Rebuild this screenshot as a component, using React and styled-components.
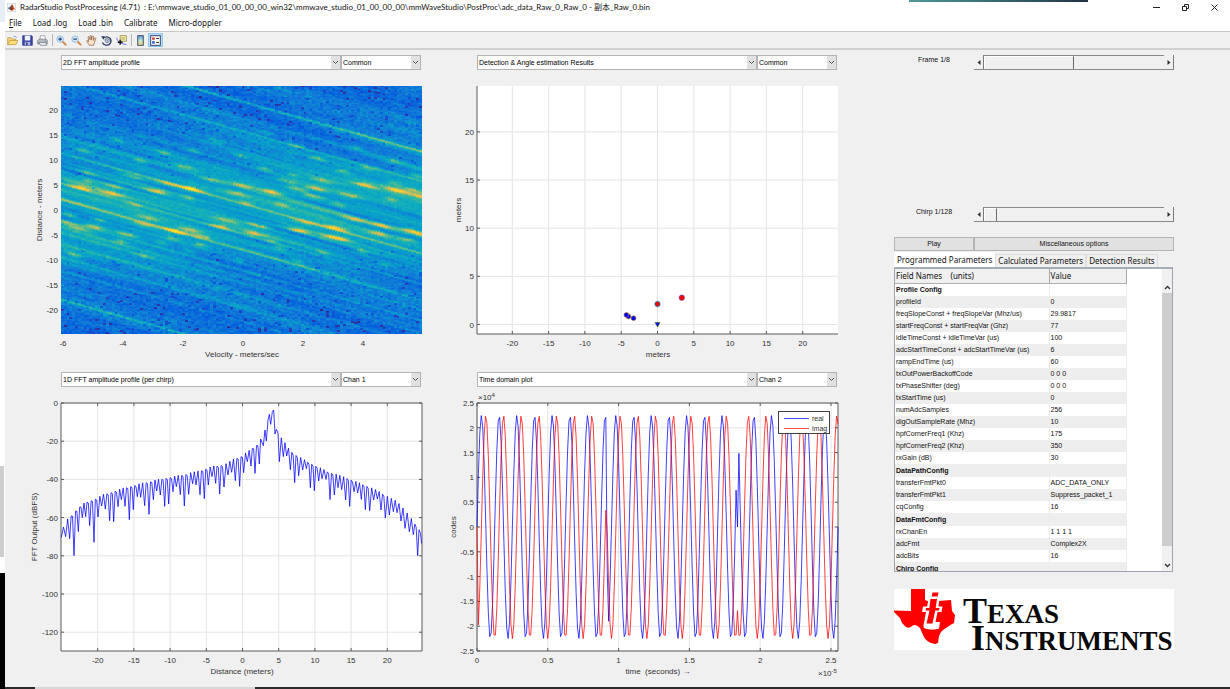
import React, { useMemo, useState } from 'react';
import styled, { createGlobalStyle } from 'styled-components';

const BG = '#f0f0f0';
const PLOT = { left: 56, right: 417, top: 16, bottom: 264 };

const range = (from, to, step) => {
    const out = [];
    for (let v = from; v <= to; v += step) out.push(v);
    return out;
};

/* ---------- data ---------- */

const PARAMS = [
    ['Profile Config'],
    ['profileId', '0'],
    ['freqSlopeConst + freqSlopeVar (Mhz/us)', '29.9817'],
    ['startFreqConst + startFreqVar (Ghz)', '77'],
    ['idleTimeConst + idleTimeVar (us)', '100'],
    ['adcStartTimeConst + adcStartTimeVar (us)', '6'],
    ['rampEndTime (us)', '60'],
    ['txOutPowerBackoffCode', '0 0 0'],
    ['txPhaseShifter (deg)', '0 0 0'],
    ['txStartTime (us)', '0'],
    ['numAdcSamples', '256'],
    ['digOutSampleRate (Mhz)', '10'],
    ['hpfCornerFreq1 (Khz)', '175'],
    ['hpfCornerFreq2 (Khz)', '350'],
    ['rxGain (dB)', '30'],
    ['DataPathConfig'],
    ['transferFmtPkt0', 'ADC_DATA_ONLY'],
    ['transferFmtPkt1', 'Suppress_packet_1'],
    ['cqConfig', '16'],
    ['DataFmtConfig'],
    ['rxChanEn', '1 1 1 1'],
    ['adcFmt', 'Complex2X'],
    ['adcBits', '16'],
    ['Chirp Config'],
];

const PARULA = [
    [0, 53, 42, 135], [0.06, 38, 62, 190], [0.13, 3, 96, 224], [0.25, 18, 124, 214],
    [0.35, 8, 156, 206], [0.44, 16, 174, 188], [0.53, 60, 184, 155], [0.63, 135, 191, 119],
    [0.74, 208, 187, 89], [0.84, 252, 200, 48], [1, 249, 240, 20],
];

const parula = (v) => {
    const i = Math.max(1, PARULA.findIndex(s => s[0] >= v));
    const a = PARULA[i - 1];
    const b = PARULA[i];
    const t = (v - a[0]) / (b[0] - a[0]);
    return `rgb(${[1, 2, 3].map(k => Math.round(a[k] + (b[k] - a[k]) * t)).join(',')})`;
};

// range-doppler ridges: [start row on the left edge, gain]
const RIDGES = [
    [-59, 0.36], [687, 0.34], [247, 0.26], [386, 0.22], [338, 0.15], [272, 0.13], [448, 0.17], [300, 0.1],
    [486, 0.12], [30, 0.19], [-10, 0.11], [130, 0.1], [200, 0.11], [160, 0.09], [520, 0.12], [560, 0.15],
    [600, 0.1], [-130, 0.12], [90, 0.08], [640, 0.08], [415, 0.1], [-180, 0.08], [325, 0.1], [470, 0.1],
];

// strong reflections: [x, y, gain]
const BLOBS = [
    [240, 350, 0.4], [335, 345, 0.25], [330, 368, 0.3], [465, 360, 0.36], [570, 353, 0.42], [500, 338, 0.26],
    [630, 327, 0.25], [720, 343, 0.3], [705, 367, 0.25], [810, 362, 0.4], [945, 352, 0.4], [885, 352, 0.3],
    [960, 328, 0.25], [860, 330, 0.28], [935, 375, 0.25], [1040, 372, 0.3], [1090, 342, 0.35], [1185, 358, 0.38],
    [1235, 358, 0.3], [1258, 376, 0.26], [235, 472, 0.28], [280, 468, 0.38], [295, 447, 0.22], [375, 490, 0.3],
    [360, 512, 0.22], [520, 480, 0.42], [565, 476, 0.3], [515, 502, 0.2], [440, 440, 0.25], [600, 495, 0.26],
    [595, 520, 0.22], [660, 467, 0.38], [675, 447, 0.24], [770, 463, 0.3], [755, 488, 0.38], [835, 530, 0.2],
    [810, 508, 0.2], [895, 478, 0.42], [910, 453, 0.24], [1000, 470, 0.38], [985, 497, 0.3], [965, 545, 0.2],
    [1020, 503, 0.28], [1140, 463, 0.35], [1130, 487, 0.3], [1225, 479, 0.38], [1215, 505, 0.28], [1260, 490, 0.3],
    [1080, 540, 0.22], [1060, 445, 0.25], [195, 455, 0.28], [430, 460, 0.25], [230, 555, 0.15], [205, 430, 0.2],
    [245, 237, 0.2], [345, 205, 0.15], [490, 245, 0.22], [575, 240, 0.22], [415, 270, 0.22], [550, 287, 0.25],
    [640, 212, 0.18], [715, 253, 0.2], [795, 185, 0.16], [885, 224, 0.18], [790, 293, 0.22], [875, 312, 0.2],
    [950, 262, 0.2], [1065, 230, 0.18], [1025, 300, 0.22], [1100, 292, 0.2], [1180, 270, 0.2], [1180, 338, 0.22],
    [1250, 315, 0.22], [480, 515, 0.2], [260, 330, 0.22], [260, 305, 0.2], [210, 548, 0.2], [560, 380, 0.2],
    [395, 317, 0.24], [400, 400, 0.18], [560, 540, 0.16], [710, 570, 0.15], [890, 570, 0.16], [1150, 580, 0.16],
    [430, 555, 0.16], [770, 610, 0.12], [840, 400, 0.2], [730, 395, 0.2], [1010, 400, 0.18], [1170, 385, 0.2],
];

const createNoise = (seed) => {
    let s = seed;
    return () => {
        s = (s * 1664525 + 1013904223) % 4294967296;
        return s / 4294967296;
    };
};

const buildHeatmap = () => {
    const rnd = createNoise(71);
    const cols = 128;
    const rows = 248;
    const levels = 30;
    const slope = 0.279;
    const edge = (c) => PLOT.left + Math.round((c * (PLOT.right - PLOT.left)) / cols);
    const streak = Array.from({ length: 600 }, () => rnd() - 0.5);
    const streakPhase = Array.from({ length: 600 }, () => rnd() * 6.28);
    const grain = Array.from({ length: rows + 1 }, () => Array.from({ length: cols }, () => rnd()));
    const hole = Array.from({ length: rows + 1 }, () => Array.from({ length: cols }, () => rnd()));
    const paths = Array.from({ length: levels + 1 }, () => '');
    const streakAt = (k, x) => streak[k] * (1 + Math.sin(x / 110 + streakPhase[k]));

    for (let r = 0; r < rows; r++) {
        let start = 0;
        let last = -1;
        const y = 46 + r * 3;
        const near = Math.exp(-(((y - 410) / 205) ** 2));
        for (let c = 0; c <= cols; c++) {
            let level = -2;
            if (c < cols) {
                const x = 183 + c * 8.45;
                const u = y - slope * (x - 183);
                let v = 0.19 + 0.21 * near;
                const k = (u + 400) / 9;
                const k0 = Math.floor(k);
                v += (streakAt(k0, x) * (k0 + 1 - k) + streakAt(k0 + 1, x) * (k - k0)) * 0.13 * (0.5 + 0.7 * near);
                v += Math.sin(u / 27 + 1.2 * Math.sin(x / 260)) * 0.035;
                RIDGES.forEach(([u0, g]) => {
                    const d = (u - u0) / 4.2;
                    if (Math.abs(d) < 3) v += g * (0.65 + 0.25 * near) * Math.exp(-d * d);
                });
                BLOBS.forEach(([bx, by, g]) => {
                    const dx = (x - bx) / (g > 0.23 ? 34 : 20);
                    if (Math.abs(dx) > 3) return;
                    const dy = (y - by - slope * 0.8 * (x - bx)) / 6.5;
                    if (Math.abs(dy) < 3) v += g * 1.05 * Math.exp(-dx * dx - dy * dy);
                });
                const n = (grain[r][c] + grain[r + 1][c]) / 2;
                v += (n - 0.5) * (0.21 - 0.12 * near);
                if (Math.min(hole[r][c], hole[r + 1][c]) < 0.03 * (1 - near) ** 1.5) v -= 0.17 * (0.4 + n);
                level = Math.round(Math.min(1, Math.max(0, v)) * levels);
            }
            if (level !== last) {
                if (last >= 0) {
                    paths[last] += `M${edge(start)} ${PLOT.top + r}H${edge(c)}v1H${edge(start)}z`;
                }
                start = c;
                last = level;
            }
        }
    }
    return paths.map((d, i) => ({ d, fill: parula(i / levels) })).filter(p => p.d);
};

const FFT_TOP = [
    [192, 485], [205, 460], [217, 450], [228, 437], [240, 425], [252, 416], [265, 410], [290, 401], [310, 390],
    [345, 379], [380, 368], [430, 355], [470, 346], [515, 337], [560, 328], [605, 317], [640, 305], [675, 300],
    [700, 284], [722, 276], [740, 264], [760, 248], [772, 240], [783, 222], [842, 218], [855, 235], [866, 252],
    [880, 267], [900, 278], [925, 293], [950, 305], [985, 322], [1020, 333], [1060, 348], [1095, 362], [1130, 377],
    [1160, 395], [1190, 410], [1210, 432], [1225, 450], [1245, 478], [1265, 505],
];

const FFT_DIPS = [
    [184, 517], [197, 515], [209, 521], [222, 572], [235, 500], [247, 458], [257, 455], [269, 482], [282, 532],
    [294, 456], [305, 423], [316, 432], [329, 467], [341, 470], [354, 425], [364, 404], [375, 424], [388, 464],
    [400, 434], [412, 395], [422, 397], [434, 422], [447, 448], [460, 404], [470, 378], [481, 390], [494, 424],
    [506, 417], [519, 380], [529, 365], [541, 389], [553, 423], [566, 388], [578, 356], [588, 360], [600, 389],
    [613, 401], [625, 360], [636, 335], [647, 355], [659, 387], [672, 366], [684, 330], [695, 322], [706, 347],
    [719, 364], [731, 323], [742, 290], [753, 303], [765, 325], [778, 297],
    [838, 290], [850, 275], [860, 273], [871, 314], [884, 353], [896, 332], [908, 315], [919, 311], [931, 368],
    [943, 377], [956, 348], [966, 341], [978, 343], [990, 404], [1003, 390], [1014, 368], [1025, 374], [1037, 405],
    [1049, 424], [1062, 380], [1073, 384], [1084, 403], [1096, 434], [1109, 437], [1121, 405], [1132, 402],
    [1143, 435], [1156, 459], [1168, 450], [1180, 440], [1191, 443], [1203, 468], [1215, 490], [1228, 500],
    [1240, 509], [1253, 572], [1265, 535],
];

const FFT_PEAK = [
    [782, 222], [790, 242], [795, 195], [799, 228], [804, 165], [808, 148], [812, 178], [817, 140], [821, 135],
    [825, 207], [829, 193], [834, 205],
];

const fftTop = (x) => {
    const i = Math.max(1, FFT_TOP.findIndex(p => p[0] >= x));
    const [x0, y0] = FFT_TOP[i - 1];
    const [x1, y1] = FFT_TOP[i];
    return y0 + ((y1 - y0) * (x - x0)) / (x1 - x0);
};

const toLine = (points) => 'M' + points.map(([x, y]) => `${x.toFixed(2)} ${y.toFixed(2)}`).join('L');

const buildFft = () => {
    const pts = [];
    FFT_DIPS.forEach((dip, i) => {
        pts.push(dip);
        const next = FFT_DIPS[i + 1];
        if (!next) return;
        if (dip[0] === 778) {
            pts.push(...FFT_PEAK);
            return;
        }
        const mid = (dip[0] + next[0]) / 2;
        // two samples share the lobe only beside the deepest nulls
        if (Math.max(dip[1], next[1]) - fftTop(mid) > 70) {
            pts.push([mid - 2, fftTop(mid - 2)], [mid + 2, fftTop(mid + 2) + 4]);
        } else {
            pts.push([mid, fftTop(mid) - 2]);
        }
    });
    return toLine(pts.map(([x, y]) => [x / 3 - 5, y / 3 - 22]));
};

const REAL_GLITCH = { 92: -0.4, 183: 0.33, 184: 0, 185: 0.66 };
const IMAG_GLITCH = { 0: 0, 91: 0.15, 184: -0.75 };

const buildSignals = () => {
    const wave = (n) => Math.sin((2 * Math.PI * n) / 12.5);
    const toPoint = (v, n) => [
        PLOT.left + (n * (PLOT.right - PLOT.left)) / 255,
        140 - v * 22500 * (124 / 25000),
    ];
    const samples = range(0, 255, 1);
    const real = samples.map(n => REAL_GLITCH[n] ?? wave(n < 92 ? n : n < 184 ? n - 95 : n - 192.5));
    const imag = samples.map(n => IMAG_GLITCH[n] ?? wave(n < 92 ? n - 3.125 : n < 184 ? n - 98.125 : n - 188.6));
    return { real: toLine(real.map(toPoint)), imag: toLine(imag.map(toPoint)) };
};

/* ---------- charts ---------- */

const Axes = ({ xs, ys, xLabel, yLabel, yLabelX, box, plain, children }) => (
    <>
        {!plain && <rect x={PLOT.left} y={PLOT.top} width="361" height="248" fill="#fff" />}
        {!plain && xs.map(([x]) => <GridLine key={x} d={`M${x} ${PLOT.top}V${PLOT.bottom}`} />)}
        {!plain && ys.map(([y]) => <GridLine key={y} d={`M${PLOT.left} ${y}H${PLOT.right}`} />)}
        {box
            ? <AxisLine d={`M${PLOT.left} ${PLOT.top}H${PLOT.right}V${PLOT.bottom}H${PLOT.left}Z`} />
            : !plain && <AxisLine d={`M${PLOT.left} ${PLOT.top}V${PLOT.bottom}H${PLOT.right}`} />}
        {!plain && xs.map(([x]) => <AxisLine key={x} d={`M${x} ${PLOT.bottom}v-3${box ? `M${x} ${PLOT.top}v3` : ''}`} />)}
        {!plain && ys.map(([y]) => <AxisLine key={y} d={`M${PLOT.left} ${y}h3${box ? `M${PLOT.right} ${y}h-3` : ''}`} />)}
        {children}
        {xs.map(([x, t]) => <Tick key={x} x={x} y="276" textAnchor="middle">{t}</Tick>)}
        {ys.map(([y, t]) => <Tick key={y} x="53" y={y + 3} textAnchor="end">{t}</Tick>)}
        <Tick x="237" y="287" textAnchor="middle">{xLabel}</Tick>
        <Tick transform={`translate(${yLabelX} 140) rotate(-90)`} textAnchor="middle">{yLabel}</Tick>
    </>
);

const HeatmapChart = () => {
    const cells = useMemo(buildHeatmap, []);
    return (
        <Chart viewBox="0 0 416 300" role="img" aria-label="2D FFT amplitude profile">
            <rect x={PLOT.left} y={PLOT.top} width="361" height="248" fill={parula(0.25)} />
            <g shapeRendering="crispEdges">
                {cells.map(c => <path key={c.fill} d={c.d} fill={c.fill} />)}
            </g>
            <Axes
                plain
                xs={range(-6, 4, 2).map(v => [238 + v * 30, v])}
                ys={range(-20, 20, 5).map(v => [140 - v * 5, v])}
                xLabel="Velocity - meters/sec"
                yLabel="Distance - meters"
                yLabelX={37}
            />
        </Chart>
    );
};

const DetectionChart = () => (
    <Chart viewBox="0 0 416 300" role="img" aria-label="Detection and angle estimation results">
        <Axes
            xs={range(-20, 20, 5).map(v => [236.5 + v * 7.26, v])}
            ys={range(0, 20, 5).map(v => [254.5 - v * 9.63, v])}
            xLabel="meters"
            yLabel="meters"
            yLabelX={40}
        >
            <circle cx="207.5" cy="246.5" r="2.4" fill="#00f" stroke="#b87a1c" strokeWidth="0.6" />
            <circle cx="205.3" cy="245" r="2.4" fill="#00f" stroke="#b87a1c" strokeWidth="0.6" />
            <circle cx="212.5" cy="248.2" r="2.4" fill="#00f" stroke="#b87a1c" strokeWidth="0.6" />
            <circle cx="236.5" cy="234" r="2.6" fill="#f00" stroke="#0072bd" strokeWidth="0.8" />
            <circle cx="260.8" cy="227.7" r="2.6" fill="#f00" stroke="#7e2f8e" strokeWidth="0.8" />
            <path d="M234 252.4h5l-2.5 4.6z" fill="#00f" stroke="#3d7a1c" strokeWidth="0.6" />
        </Axes>
    </Chart>
);

const FftChart = () => {
    const line = useMemo(buildFft, []);
    return (
        <Chart viewBox="0 0 416 300" role="img" aria-label="1D FFT amplitude profile">
            <Axes
                box
                xs={range(-20, 20, 5).map(v => [237.5 + v * 7.24, v])}
                ys={range(0, 6, 1).map(v => [16 + v * 38.2, v ? v * -20 : 0])}
                xLabel="Distance (meters)"
                yLabel="FFT Output (dBFS)"
                yLabelX={32}
            >
                <Trace d={line} stroke="#00f" />
            </Axes>
        </Chart>
    );
};

const TimeChart = () => {
    const { real, imag } = useMemo(buildSignals, []);
    return (
        <Chart viewBox="0 0 416 300" role="img" aria-label="Time domain plot">
            <Axes
                box
                xs={range(0, 5, 1).map(v => [56 + v * 70.8, v / 2])}
                ys={range(-5, 5, 1).map(v => [140 - v * 24.8, v / 2])}
                xLabel={'time \u00a0(seconds) →'}
                yLabel="codes"
                yLabelX={35}
            >
                <Trace d={real} stroke="#00f" />
                <Trace d={imag} stroke="#f00" />
                <rect x="357.5" y="24.5" width="51" height="22" fill="#fff" stroke="#404040" />
                <path d="M363 31.5h25" stroke="#00f" strokeOpacity="0.7" />
                <path d="M363 41.5h25" stroke="#f00" strokeOpacity="0.7" />
                <LegendText x="391" y="34">real</LegendText>
                <LegendText x="391" y="44">imag</LegendText>
            </Axes>
            <Tick x="57" y="13">×10<tspan fontSize="6" dy="-3">4</tspan></Tick>
            <Tick x="397" y="289">×10<tspan fontSize="6" dy="-3">-5</tspan></Tick>
        </Chart>
    );
};

const Panel = ({ title, channel, children }) => (
    <PanelBox>
        <SelectRow>
            <Picker label="Plot" value={title} />
            <Picker label="Channel" value={channel} />
        </SelectRow>
        {children}
    </PanelBox>
);

const Picker = ({ label, value }) => (
    <SelectWrap>
        <Select aria-label={label} defaultValue={value}>
            <option value={value}>{value}</option>
        </Select>
        <SelectArrow>
            <svg width="7" height="5" viewBox="0 0 7 5"><path d="M1 1l2.5 2.5L6 1" fill="none" stroke="#505050" /></svg>
        </SelectArrow>
    </SelectWrap>
);

const ScrollSlider = ({ id, label, max, value, thumb }) => {
    const [current, setCurrent] = useState(value);
    return (
        <SliderRow>
            <SliderLabel htmlFor={id}>{label} {current}/{max}</SliderLabel>
            <SliderBox>
                <ArrowButton aria-label="Previous" onClick={() => setCurrent(Math.max(1, current - 1))}>
                    <svg width="4" height="5" viewBox="0 0 4 5"><path d="M3.5 0v5L.5 2.5z" fill="#303030" /></svg>
                </ArrowButton>
                <Slider id={id} type="range" min="1" max={max} value={current} $thumb={thumb} onChange={e => setCurrent(Number(e.target.value))} />
                <ArrowButton aria-label="Next" onClick={() => setCurrent(Math.min(max, current + 1))}>
                    <svg width="4" height="5" viewBox="0 0 4 5"><path d="M.5 0v5l3-2.5z" fill="#303030" /></svg>
                </ArrowButton>
            </SliderBox>
        </SliderRow>
    );
};

/* ---------- icons ---------- */

const Icon = ({ children }) => <svg width="11" height="11" viewBox="0 0 16 16" aria-hidden="true">{children}</svg>;

const MatlabIcon = () => (
    <svg width="9" height="9" viewBox="0 0 16 16" aria-hidden="true">
        <rect x="0.5" y="0.5" width="15" height="15" fill="#f4f6f8" stroke="#c5ccd4" />
        <path d="M1 9l4-2 3-4-1 7-2 2z" fill="#3a7ca8" />
        <path d="M5 12L9 2c2 1 3 7 6 10-3-1-4 0-6 2-1-2-2-2-4-2z" fill="#d8521c" />
        <path d="M5 12L9 2l1 8-1 4c-1-2-2-2-4-2z" fill="#8c2b16" />
    </svg>
);

const OpenIcon = () => (
    <Icon>
        <path d="M1 14V4h5l1 2h6v2" fill="#f5d77a" stroke="#b8923a" />
        <path d="M1 14l3-6h12l-3 6z" fill="#fbe07a" stroke="#b8923a" />
        <path d="M9 3c2-2 4-1 5 1" fill="none" stroke="#5b8ac0" />
    </Icon>
);

const SaveIcon = () => (
    <Icon>
        <path d="M1 1h13l1 1v13H1z" fill="#3a45a8" stroke="#262f80" />
        <rect x="4" y="1" width="8" height="7" fill="#f2f4fb" />
        <rect x="4" y="10" width="8" height="5" fill="#aab4dc" />
        <rect x="6" y="11" width="2" height="4" fill="#262f80" />
    </Icon>
);

const PrintIcon = () => (
    <Icon>
        <path d="M4 7l1-6h6l2 6" fill="#fff" stroke="#8a8f98" />
        <path d="M1 8l2-2h10l2 2v5H1z" fill="#b8bcc2" stroke="#6d737c" />
        <path d="M3 11h10l1 4H5z" fill="#eef0f2" stroke="#6d737c" />
        <path d="M11 9h2" stroke="#3a8a3a" />
    </Icon>
);

const ZoomIcon = ({ plus }) => (
    <Icon>
        <path d="M9.5 9.5l4.5 4.5" stroke="#d98a4a" strokeWidth="3" strokeLinecap="round" />
        <circle cx="6" cy="6" r="4.8" fill="#cfe5f6" stroke="#9cc0de" strokeWidth="1.4" />
        <path d={plus ? 'M3.5 6h5M6 3.5v5' : 'M3.5 6h5'} stroke="#1d3f78" strokeWidth="1.8" />
    </Icon>
);

const HandIcon = () => (
    <Icon>
        <path d="M5 15L1 9c0-1 1-2 2 0l1 1-1-7c0-1 1.5-1 2 0l1 4V1.5c0-1 1.5-1 2 0V7l1-5c.5-1 2-.5 2 .5L10.5 8l2-3.5c1-1 2 0 1.5 1L12 12l-1 3z" fill="#fbe3cc" stroke="#8a5a3c" />
    </Icon>
);

const RotateIcon = () => (
    <Icon>
        <path d="M3 5a6.5 6 0 1 1-1 6" fill="none" stroke="#2e3f66" strokeWidth="2" />
        <path d="M0 2l5-.5L4 7z" fill="#2e3f66" />
        <path d="M6 6l3-1 3 1.5v3L9 11.5 6 9.5zM6 6l3 1.5 3-1M9 7.5v4" fill="#dde3ee" stroke="#5a6a8c" />
    </Icon>
);

const CursorIcon = () => (
    <Icon>
        <rect x="6" y="1" width="9" height="8" fill="#f3eba4" stroke="#8c8440" />
        <path d="M8 4h5M8 6h5" stroke="#a59c58" />
        <path d="M1 4c1 6 5 8 14 10" fill="none" stroke="#4a4af0" strokeWidth="1.2" />
        <path d="M6 7v7M2.5 10.5h7" stroke="#111" strokeWidth="2" />
    </Icon>
);

const ColorbarIcon = () => (
    <Icon>
        <defs>
            <linearGradient id="bar" x1="0" y1="0" x2="0" y2="1">
                <stop offset="0" stopColor="#5aa0e0" />
                <stop offset="0.5" stopColor="#b9e4d0" />
                <stop offset="1" stopColor="#f6d878" />
            </linearGradient>
        </defs>
        <rect x="4" y="1" width="8" height="14" fill="url(#bar)" stroke="#3c4a66" strokeWidth="1.4" />
    </Icon>
);

const LegendIcon = () => (
    <Icon>
        <rect x="1" y="1" width="14" height="14" fill="#fff" stroke="#2e3f66" strokeWidth="1.4" />
        <rect x="3" y="3.5" width="4" height="3.5" fill="#e04a3c" />
        <rect x="3" y="9" width="4" height="3.5" fill="#3c5ae0" />
        <path d="M9 5h4M9 11h4" stroke="#333" strokeWidth="1.5" />
    </Icon>
);

const TiLogo = () => (
    <Logo viewBox="0 0 280 61" role="img" aria-label="Texas Instruments">
        <rect width="280" height="61" fill="#fff" />
        <path d="M17 0H31V11L36 13L44 12L57 11L58 22L61 26L60 34C55 37 51 39 47 43L45 47L44 54L41 55C35 54 31 51 29 46L26 39C23 36 20 35 18 37C16 39 14 39 12 38L8 34L6 29L0 23V21.5L17 22Z" fill="#f00" />
        <path d="M35 8.5H45.5L44.5 17.5H48.5L47.5 23H43.5L41.5 33H46L45 39.5C42 41 35 41 31 39.5C29 38.5 29.5 36 30 34L32 23H28L29 17.5H33Z" fill="#fff" />
        <path d="M37.5 2H45.5L44.5 8.5H36.5Z" fill="#fff" />
        <path d="M38.5 3.5H44.5L43.7 7.5H37.7Z" fill="#f00" />
        <path d="M36.5 10H43L41.7 19H45.5L45 21.5H41.2L38.5 34.5H32.5L35.5 21.5H31.5L32 19H35.3Z" fill="#f00" />
        <LogoText x="69" y="34">T<tspan fontSize="27">EXAS</tspan></LogoText>
        <LogoText x="77" y="61">I<tspan fontSize="27">NSTRUMENTS</tspan></LogoText>
    </Logo>
);

function App() {
    return (
        <Page>
            <GlobalStyle />
            <Edge>
                <EdgeTop />
                <EdgeThumb />
                <EdgeGap />
                <EdgeDark />
            </Edge>
            <Window>
                <BackStrip />
                <TitleBar>
                    <MatlabIcon />
                    <Title>{'RadarStudio PostProcessing (4.71)  : E:\\mmwave_studio_01_00_00_00_win32\\mmwave_studio_01_00_00_00\\mmWaveStudio\\PostProc\\adc_data_Raw_0_Raw_0 - 副本_Raw_0.bin'}</Title>
                    <WindowButton aria-label="Minimize"><svg width="9" height="9"><path d="M1 4.5h7" stroke="#222" /></svg></WindowButton>
                    <WindowButton aria-label="Restore"><svg width="9" height="9"><path d="M1.5 3.5h4v4h-4zM3.5 3V1.5h4v4H6" fill="none" stroke="#222" /></svg></WindowButton>
                    <WindowButton aria-label="Close"><svg width="9" height="9"><path d="M1.5 1.5l6 6M7.5 1.5l-6 6" stroke="#222" /></svg></WindowButton>
                </TitleBar>
                <MenuBar>
                    <MenuItem><u>F</u>ile</MenuItem>
                    <MenuItem>Load .log</MenuItem>
                    <MenuItem>Load .bin</MenuItem>
                    <MenuItem>Calibrate</MenuItem>
                    <MenuItem>Micro-doppler</MenuItem>
                </MenuBar>
                <Toolbar>
                    <ToolButton aria-label="Open"><OpenIcon /></ToolButton>
                    <ToolButton aria-label="Save"><SaveIcon /></ToolButton>
                    <ToolButton aria-label="Print"><PrintIcon /></ToolButton>
                    <Divider />
                    <ToolButton aria-label="Zoom in"><ZoomIcon plus /></ToolButton>
                    <ToolButton aria-label="Zoom out"><ZoomIcon /></ToolButton>
                    <ToolButton aria-label="Pan"><HandIcon /></ToolButton>
                    <ToolButton aria-label="Rotate 3D"><RotateIcon /></ToolButton>
                    <ToolButton aria-label="Data cursor"><CursorIcon /></ToolButton>
                    <Divider />
                    <ToolButton aria-label="Insert colorbar"><ColorbarIcon /></ToolButton>
                    <ToolButton aria-label="Insert legend" $active><LegendIcon /></ToolButton>
                </Toolbar>
                <Figure>
                    <Plots>
                        <Panel title="2D FFT amplitude profile" channel="Common"><HeatmapChart /></Panel>
                        <Panel title="Detection & Angle estimation Results" channel="Common"><DetectionChart /></Panel>
                        <Panel title="1D FFT amplitude profile (per chirp)" channel="Chan 1"><FftChart /></Panel>
                        <Panel title="Time domain plot" channel="Chan 2"><TimeChart /></Panel>
                    </Plots>
                    <Side>
                        <Sliders>
                            <ScrollSlider id="frame" label="Frame" max={8} value={1} thumb="50%" />
                            <ScrollSlider id="chirp" label="Chirp" max={128} value={1} thumb="13px" />
                        </Sliders>
                        <Buttons>
                            <PushButton>Play</PushButton>
                            <PushButton>Miscellaneous options</PushButton>
                        </Buttons>
                        <Tabs role="tablist">
                            <Tab role="tab" aria-selected="true" $active>Programmed Parameters</Tab>
                            <Tab role="tab" aria-selected="false">Calculated Parameters</Tab>
                            <Tab role="tab" aria-selected="false">Detection Results</Tab>
                        </Tabs>
                        <TableBox>
                            <TableView>
                                <Table>
                                    <thead>
                                        <tr>
                                            <Th>{'Field Names \u00a0 \u00a0(units)'}</Th>
                                            <Th>Value</Th>
                                        </tr>
                                    </thead>
                                    <tbody>
                                        {PARAMS.map(([name, value]) => (
                                            <Row key={name} $group={!value}>
                                                <td>{name}</td>
                                                <td>{value}</td>
                                            </Row>
                                        ))}
                                    </tbody>
                                </Table>
                            </TableView>
                            <ScrollBar>
                                <ScrollCorner />
                                <ScrollButton aria-label="Scroll up"><svg width="7" height="5"><path d="M1 4l2.5-2.5L6 4" fill="none" stroke="#333" strokeWidth="1.3" /></svg></ScrollButton>
                                <ScrollThumb />
                                <ScrollButton aria-label="Scroll down"><svg width="7" height="5"><path d="M1 1l2.5 2.5L6 1" fill="none" stroke="#333" strokeWidth="1.3" /></svg></ScrollButton>
                            </ScrollBar>
                        </TableBox>
                        <TiLogo />
                    </Side>
                </Figure>
                <BottomEdge />
            </Window>
        </Page>
    );
}

export default App;

const GlobalStyle = createGlobalStyle`
    * {
        box-sizing: border-box;
    }
    body {
        margin: 0;
        background: ${BG};
        font-family: "Liberation Sans", Arial, sans-serif;
        color: #111;
    }
    button {
        padding: 0;
        border: 0;
        background: none;
        font: inherit;
        color: inherit;
    }
    svg {
        display: block;
        flex: none;
    }
`;

const Page = styled.div`
    display: flex;
    min-height: 100vh;
`;

const Edge = styled.aside`
    display: flex;
    flex-direction: column;
    width: 5px;
    background: #fff;
`;

const EdgeTop = styled.div`
    flex: 444;
    border-top: 22px solid #e6edf5;
`;

const EdgeThumb = styled.div`
    flex: 91;
    width: 4px;
    background: #cdcdcd;
`;

const EdgeGap = styled.div`
    flex: 16;
`;

const EdgeDark = styled.div`
    flex: 116;
    background: #000;
`;

const Window = styled.div`
    position: relative;
    display: flex;
    flex-direction: column;
    flex: 1;
    min-width: 0;
    background: ${BG};
`;

const BackStrip = styled.div`
    position: absolute;
    top: 0;
    right: 142px;
    width: 179px;
    height: 2px;
    background: linear-gradient(90deg, #4f9a9a, #1f3347);
`;

const TitleBar = styled.header`
    display: flex;
    align-items: center;
    height: 15px;
    padding: 0 11px 0 2px;
    background: #fff;
`;

const uiFont = '"Noto Sans", "Noto Sans CJK SC", sans-serif';

const Title = styled.h1`
    flex: 1;
    margin: 0 0 0 4px;
    font: 400 8px/15px Lato, "Noto Sans CJK SC", sans-serif;
    white-space: pre;
    overflow: hidden;
`;

const WindowButton = styled.button`
    display: flex;
    justify-content: center;
    align-items: center;
    width: 9px;
    height: 15px;
    margin-left: 20px;
`;

const MenuBar = styled.nav`
    display: flex;
    gap: 11px;
    height: 16px;
    padding: 0 4px;
    background: #fff;
`;

const MenuItem = styled.button`
    font: 400 8px/16px ${uiFont};
`;

const Toolbar = styled.div`
    display: flex;
    align-items: center;
    height: 19px;
    border-top: 1px solid #c8c8c8;
    border-bottom: 2px solid #d0d0d0;
`;

const ToolButton = styled.button`
    display: flex;
    justify-content: center;
    align-items: center;
    width: 15px;
    height: 14px;
    background: ${({ $active }) => ($active ? '#bcdcf4' : 'none')};
    outline: ${({ $active }) => ($active ? '1px solid #90c8f6' : 'none')};
    outline-offset: -1px;
`;

const Divider = styled.div`
    width: 1px;
    height: 12px;
    margin: 0 1px 0 2px;
    background: #b8b8b8;
`;

const Figure = styled.main`
    display: grid;
    grid-template-columns: 832fr 337fr;
    padding: 5px 56px 0 0;
`;

const Plots = styled.section`
    display: grid;
    grid-template-columns: 1fr 1fr;
    row-gap: 2px;
    align-content: start;
`;

const PanelBox = styled.div`
    display: flex;
    flex-direction: column;
`;

const SelectRow = styled.div`
    display: grid;
    grid-template-columns: 280fr 80fr;
    padding-left: 56px;
`;

const SelectWrap = styled.div`
    display: flex;
    height: 15px;
    border: 1px solid #b4b4b4;
    background: #fff;
`;

const Select = styled.select`
    appearance: none;
    flex: 1;
    min-width: 0;
    padding: 0 0 0 1px;
    border: 0;
    background: none;
    font: 400 7px/13px "Liberation Sans", Arial, sans-serif;
    color: #000;
`;

const SelectArrow = styled.span`
    display: flex;
    justify-content: center;
    align-items: center;
    width: 9px;
    background: #e1e1e1;
    pointer-events: none;
`;

const Chart = styled.svg`
    width: 100%;
    height: auto;
    overflow: visible;
`;

const Tick = styled.text`
    font-family: "Liberation Sans", Arial, sans-serif;
    font-size: 8px;
    fill: #333;
`;

const LegendText = styled(Tick)`
    font-size: 7px;
`;

const GridLine = styled.path`
    stroke: #e4e4e4;
    fill: none;
`;

const AxisLine = styled.path`
    stroke: #5a5a5a;
    fill: none;
`;

const Trace = styled.path`
    fill: none;
    stroke-width: 1;
    stroke-opacity: 0.75;
    stroke-linejoin: round;
`;

const Side = styled.section`
    display: flex;
    flex-direction: column;
    padding-left: 57px;
`;

const Sliders = styled.div`
    display: flex;
    flex-direction: column;
    gap: 137px;
`;

const SliderRow = styled.div`
    display: grid;
    grid-template-columns: 80fr 200fr;
    height: 15px;
`;

const SliderLabel = styled.label`
    font-size: 7px;
    line-height: 10px;
    text-align: center;
`;

const SliderBox = styled.div`
    display: flex;
    border-bottom: 1px solid #8a8a8a;
`;

const ArrowButton = styled.button`
    display: flex;
    justify-content: center;
    align-items: center;
    width: 10px;
    border-right: 1px solid #7a7a7a;
`;

const Slider = styled.input`
    appearance: none;
    flex: 1;
    min-width: 0;
    height: 14px;
    margin: 0;
    border-top: 1px solid #8a8a8a;
    background: ${BG};

    &::-webkit-slider-thumb {
        appearance: none;
        width: ${({ $thumb }) => $thumb};
        height: 13px;
        background: ${BG};
        border-top: 1px solid #fff;
        border-left: 1px solid #fff;
        border-right: 1px solid #6a6a6a;
    }
`;

const Buttons = styled.div`
    display: grid;
    grid-template-columns: 80fr 200fr;
    margin-top: 15px;
`;

const PushButton = styled.button`
    height: 14px;
    border: 1px solid #b4b4b4;
    background: #e1e1e1;
    font-size: 7px;
    line-height: 12px;
`;

const Tabs = styled.div`
    display: flex;
    align-items: flex-end;
    height: 16px;
`;

const Tab = styled.button`
    height: ${({ $active }) => ($active ? '15px' : '13px')};
    padding: 0 2px;
    border: 1px solid ${({ $active }) => ($active ? '#fff' : '#dcdcdc')};
    border-bottom: 0;
    background: ${({ $active }) => ($active ? '#fff' : BG)};
    font: 400 8px/12px ${uiFont};
    white-space: nowrap;
`;

const TableBox = styled.div`
    display: flex;
    height: 305px;
    margin-right: 1px;
    border: 1px solid #a0a4ac;
    border-top: 2px solid #a8acb4;
    background: #fff;
`;

const TableView = styled.div`
    flex: 1;
    min-width: 0;
    overflow: hidden;
`;

const Table = styled.table`
    width: 231px;
    table-layout: fixed;
    border-collapse: collapse;
    font-size: 7px;

    td {
        padding: 0 1px;
        border-right: 1px solid #ececec;
        line-height: 10px;
        white-space: nowrap;
    }
`;

const Th = styled.th`
    width: 154px;
    height: 14px;
    padding: 0 1px;
    border-right: 1px solid #a8a8a8;
    border-bottom: 1px solid #b0b0b0;
    background: ${BG};
    font: 400 8px/12px ${uiFont};
    text-align: left;

    & + & {
        width: 77px;
    }
`;

const Row = styled.tr`
    height: ${({ $group }) => ($group ? '13px' : '12px')};
    font-weight: ${({ $group }) => ($group ? 700 : 400)};

    &:nth-child(even) {
        background: #eee;
    }
`;

const ScrollBar = styled.div`
    display: flex;
    flex-direction: column;
    width: 10px;
    background: ${BG};
`;

const ScrollCorner = styled.div`
    height: 13px;
`;

const ScrollButton = styled.button`
    display: flex;
    justify-content: center;
    align-items: center;
    height: 11px;
`;

const ScrollThumb = styled.div`
    flex: 1;
    margin-bottom: 14px;
    background: #cdcdcd;
`;

const Logo = styled.svg`
    width: 100%;
    height: auto;
    margin-top: 17px;
    overflow: visible;
`;

const LogoText = styled.text`
    font-family: "Liberation Serif", "Times New Roman", serif;
    font-size: 36px;
    font-weight: 700;
    fill: #0a0a0a;
`;

const BottomEdge = styled.div`
    height: 2px;
    margin-top: auto;
    background: linear-gradient(90deg, #2a2a2a 30px, #d8d8d8 30px, #d8d8d8 250px, #2a2a2a 250px);
`;
